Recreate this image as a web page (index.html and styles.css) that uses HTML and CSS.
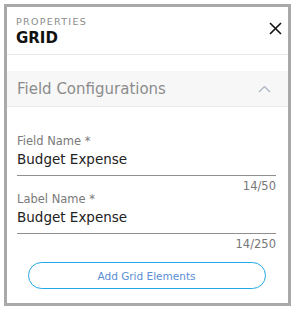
FILE: index.html
```html
<!DOCTYPE html>
<html lang="en">
<head>
  <meta charset="UTF-8" />
  <title>Grid Properties</title>
  <link rel="stylesheet" href="styles.css">
</head>
<body>
  <div class="panel">
    <!-- HEADER -->
    <div class="panel-head">
      <div class="titles">
        <div class="kicker">PROPERTIES</div>
        <div class="title">GRID</div>
      </div>
      <button class="close" aria-label="Close">
        <svg width="13" height="13" viewBox="0 0 13 13"><path d="M1 1L12 12M12 1L1 12" stroke="#111" stroke-width="1.6" fill="none"/></svg>
      </button>
    </div>

    <!-- SECTION -->
    <div class="section">
      <div class="section-head">
        <span>Field Configurations</span>
        <svg width="13" height="8" viewBox="0 0 13 8"><path d="M1 7L6.5 1.5L12 7" stroke="#a9b3c4" stroke-width="1.2" fill="none"/></svg>
      </div>
      <div class="section-body">
        <div class="field">
          <label>Field Name *</label>
          <div class="value">Budget Expense</div>
          <div class="count">14/50</div>
        </div>
        <div class="field">
          <label>Label Name *</label>
          <div class="value">Budget Expense</div>
          <div class="count">14/250</div>
        </div>
        <button class="add-btn">Add Grid Elements</button>
      </div>
    </div>
  </div>
</body>
</html>
```

FILE: styles.css
```css
html, body {
  margin: 0;
  padding: 0;
  background: #fff;
  font-family: 'DejaVu Sans', sans-serif;
}

.panel {
  margin: 4px;
  width: 287px;
  height: 302px;
  box-sizing: border-box;
  border: 3px solid #a9a9a9;
  background: #fff;
}

.panel-head {
  display: flex;
  align-items: flex-start;
  justify-content: space-between;
  padding: 9px 6px 0 9px;
  height: 38px;
  border-bottom: 1px solid #e6e6e6;
}

.kicker {
  font-size: 9.5px;
  letter-spacing: 1.3px;
  color: #8a8a8a;
  line-height: 12px;
}

.title {
  font-size: 15px;
  font-weight: bold;
  color: #111;
  line-height: 18px;
  margin-top: 1px;
}

.close {
  border: none;
  background: none;
  padding: 0;
  margin-top: 6px;
  cursor: pointer;
}

.section {
  margin-top: 16px;
}

.section-head {
  display: flex;
  align-items: center;
  justify-content: space-between;
  height: 35px;
  padding: 0 17px 0 10px;
  background: #f7f7f7;
  border-bottom: 1px solid #ebebeb;
  font-size: 15px;
  color: #8c8c8c;
}

.section-body {
  padding: 27px 12px 0 10px;
}

.field label {
  display: block;
  font-size: 11.5px;
  color: #7a7a7a;
  line-height: 15px;
}

.value {
  font-size: 13.5px;
  color: #222;
  line-height: 20px;
  padding-bottom: 6px;
  border-bottom: 1px solid #8f8f8f;
}

.count {
  text-align: right;
  font-size: 11.5px;
  color: #777;
  line-height: 12px;
  margin-top: 4px;
}

.add-btn {
  display: block;
  width: 238px;
  height: 27px;
  margin: 12px auto 0;
  border: 1.5px solid #22a8e6;
  border-radius: 14px;
  background: #fff;
  color: #5a8ed6;
  font-family: inherit;
  font-size: 10.5px;
  cursor: pointer;
}
```
